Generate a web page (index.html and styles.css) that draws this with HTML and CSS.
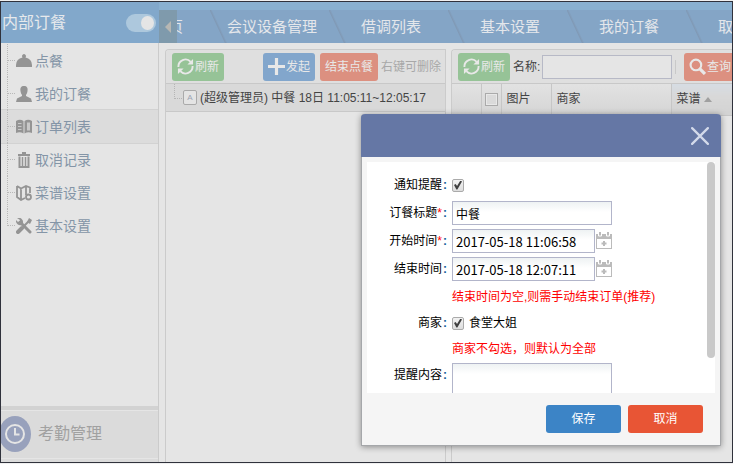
FILE: index.html
```html
<!DOCTYPE html>
<html lang="zh-CN">
<head>
<meta charset="utf-8">
<title>内部订餐</title>
<link rel="stylesheet" href="styles.css">
</head>
<body>
<svg class="defs" aria-hidden="true">
  <symbol id="refresh" viewBox="0 0 18 18"><g fill="none" stroke="currentColor" stroke-width="2"><path d="M1.500 9.500A7.500 7.500 0 0 1 14.500 4"/><path d="M16.500 8.500A7.500 7.500 0 0 1 3.500 14"/></g><path fill="currentColor" d="M17 1v6h-6zM1 17v-6h6z"/></symbol>
  <symbol id="calendar" viewBox="0 0 16 18"><path fill="currentColor" d="M0 2h16v15H0z"/><path fill="#fff" d="M1 7h14v9H1z"/><path fill="currentColor" stroke="#fff" d="M2.500 -1h3v5h-3zM10.500 -1h3v5h-3z"/><path stroke="currentColor" stroke-width="2" d="M8 9v5M5.500 11.500h5"/></symbol>
</svg>
<div class="app">
  <aside class="sidebar">
    <header class="side-head"><h1>内部订餐</h1><label class="switch"><input type="checkbox" checked aria-label="内部订餐"></label></header>
    <nav class="side-nav">
      <a href="#"><svg viewBox="0 0 16 16"><path fill="currentColor" d="M0 14v-2a8 8 0 0 1 6.500-7.500 2 2 0 1 1 3 0A8 8 0 0 1 16 12v2z"/></svg>点餐</a>
      <a href="#"><svg viewBox="0 0 16 16"><path fill="currentColor" d="M8 0c3 0 4 2 3.500 5-.2 2-1 3-1.500 4v1l5 2.500 1 3.500H0l1-3.500L6 10V9C5.500 8 4.700 7 4.500 5 4 2 5 0 8 0z"/></svg>我的订餐</a>
      <a href="#" class="active"><svg viewBox="0 0 16 16"><path fill="currentColor" d="M0 2Q4-.5 7.500 2v12.500Q4 12.500 0 14zM16 2Q12-.5 8.500 2v12.500Q12 12.500 16 14z"/><path stroke="#c8c8c8" d="M2 4.500h3.500M2 7.500h3.500M2 10.500h3.500"/><path fill="#c8c8c8" d="M11 3.500h3v8h-3z"/></svg>订单列表</a>
      <a href="#"><svg viewBox="0 0 16 16"><path fill="currentColor" d="M2 2h4V0h4v2h4v2H2z"/><path fill="none" stroke="currentColor" stroke-width="2" d="M3.500 4.500V15h9V4.500"/><path stroke="currentColor" stroke-width="1.500" d="M6.500 5v10M9.500 5v10"/></svg>取消记录</a>
      <a href="#"><svg viewBox="0 0 16 16"><path fill="none" stroke="currentColor" stroke-width="1.800" d="M1 1l4 2.500L10 1l4 1.500V8M1 1v11l4 3 4-2M5 3.500V15M10 1v9"/><circle cx="12.500" cy="12" r="2.500" fill="none" stroke="currentColor" stroke-width="1.800"/></svg>菜谱设置</a>
      <a href="#"><svg viewBox="0 0 16 16"><g stroke="currentColor" stroke-linecap="round"><path stroke-width="3" d="M4 4l10 10"/><path stroke-width="2" d="M13 3L8 8"/><path stroke-width="4" d="M6 10l-4 4"/></g><path fill="currentColor" d="M1 0l3 2v2L2 4 0 2a4.500 4.500 0 0 0 6 5L7 5A4.500 4.500 0 0 0 1 0zM13 0l3 2-2 4-3-2z"/></svg>基本设置</a>
    </nav>
    <a href="#" class="side-group"><svg viewBox="0 0 32 36"><ellipse cx="16" cy="18" rx="16" ry="18" fill="#98a1bc"/><circle cx="16" cy="18" r="9" fill="none" stroke="#e5e5e5" stroke-width="2"/><path d="M16 12v6.500h4.500" fill="none" stroke="#e5e5e5" stroke-width="2"/></svg>考勤管理</a>
  </aside>
  <main class="main">
    <nav class="tabs">
      <button class="scroll-left" aria-label="向左"></button>
      <a href="#" class="first">页</a>
      <a href="#" class="long">会议设备管理</a>
      <a href="#">借调列表</a>
      <a href="#">基本设置</a>
      <a href="#">我的订餐</a>
      <a href="#">取消记录</a>
    </nav>
    <div class="panels">
      <section class="panel orders">
        <div class="toolbar">
          <button class="btn green"><svg><use href="#refresh"/></svg>刷新</button>
          <span class="spring"></span>
          <button class="btn blue"><svg viewBox="0 0 16 16"><path stroke="currentColor" stroke-width="3" d="M8 0v16M0 8h16"/></svg>发起</button>
          <button class="btn red">结束点餐</button>
          <span class="hint">右键可删除</span>
        </div>
        <div class="tree-row"><span class="node">A</span>(超级管理员) 中餐 18日 11:05:11~12:05:17</div>
      </section>
      <section class="panel">
        <div class="toolbar">
          <button class="btn green"><svg><use href="#refresh"/></svg>刷新</button>
          <label class="search">名称:<input type="text"></label>
          <span class="divider"></span>
          <button class="btn red query"><svg viewBox="0 0 16 16"><circle cx="6.500" cy="6.500" r="5" fill="none" stroke="currentColor" stroke-width="2"/><path stroke="currentColor" stroke-width="3" d="M10 10l5 5"/></svg>查询</button>
        </div>
        <table class="grid">
          <thead><tr><th class="c-num"></th><th class="c-check"><input type="checkbox" class="check pale" aria-label="全选"></th><th class="c-pic">图片</th><th class="c-shop">商家</th><th class="sorted">菜谱 <span class="sort"></span></th></tr></thead>
        </table>
      </section>
    </div>
  </main>
  <div class="dialog" role="dialog" aria-label="订餐">
    <header class="dialog-head"><button class="close" aria-label="关闭"><svg viewBox="0 0 16 16"><path stroke="currentColor" stroke-width="2" stroke-linecap="round" d="M1 1l14 14M15 1L1 15"/></svg></button></header>
    <div class="dialog-body">
      <form class="form" id="order">
        <label for="notify">通知提醒<i>:</i></label><div><input type="checkbox" class="check" id="notify" checked></div>
        <label for="title">订餐标题<b>*</b><i>:</i></label><div><input type="text" id="title" value="中餐"></div>
        <label for="start">开始时间<b>*</b><i>:</i></label><div><input type="text" class="date" id="start" value="2017-05-18 11:06:58"><svg class="cal"><use href="#calendar"/></svg></div>
        <label for="end">结束时间<i>:</i></label><div><input type="text" class="date" id="end" value="2017-05-18 12:07:11"><svg class="cal"><use href="#calendar"/></svg></div>
        <p class="note">结束时间为空,则需手动结束订单(推荐)</p>
        <span class="label">商家<i>:</i></span><div><label class="option"><input type="checkbox" class="check" checked>食堂大姐</label></div>
        <p class="note">商家不勾选，则默认为全部</p>
        <label for="content">提醒内容<i>:</i></label><div><textarea id="content"></textarea></div>
      </form>
      <span class="thumb"></span>
    </div>
    <footer class="dialog-foot"><button class="save">保存</button><button class="cancel">取消</button></footer>
  </div>
</div>
</body>
</html>
```
FILE: styles.css
```css
* { box-sizing: border-box; }
body {
  margin: 0;
  padding: 1px 0;
  background: #f0f0f0;
  font: 12px/16px "Liberation Sans", "Noto Sans CJK SC", sans-serif;
  color: #444;
}
button, input, textarea { font: inherit; color: inherit; margin: 0; }
button { border: 0; padding: 0; }
a { text-decoration: none; color: inherit; }
i { font-style: normal; }
.defs { position: absolute; width: 0; height: 0; }

.app {
  position: relative;
  display: flex;
  height: calc(100vh - 2px);
  overflow: hidden;
  border: 1px solid #30323c;
  background: #e5e5e5;
}

/* Sidebar */
.sidebar {
  flex: 0 0 158px;
  display: flex;
  flex-direction: column;
  border-right: 1px solid #cbcbcb;
}
.side-head {
  display: flex;
  align-items: center;
  justify-content: space-between;
  height: 41px;
  margin-right: -1px;
  padding: 0 3px 0 1px;
  background: #82a8cb;
  color: #e6e9ec;
}
.side-head h1 { margin: 0; font-size: 16px; font-weight: 400; }
.switch { display: flex; }
.switch input {
  appearance: none;
  display: flex;
  justify-content: flex-end;
  width: 30px;
  height: 18px;
  padding: 2px;
  border-radius: 9px;
  background: #adc8dd;
}
.switch input::before { content: ""; width: 13px; height: 14px; border-radius: 50%; background: #e5e5e5; }
.side-nav { padding-top: 1px; flex: 1; }
.side-nav a {
  display: flex;
  align-items: center;
  gap: 3px;
  height: 33px;
  font-size: 14px;
  color: #8495a7;
}
.side-nav a::before {
  content: "";
  width: 7px;
  align-self: stretch;
  margin: 0 -2px 0 6px;
  border-left: 1px dotted #b8b8b8;
  background: linear-gradient(90deg, #b8b8b8 50%, transparent 50%) 0 16px / 2px 1px repeat-x;
}
.side-nav a:last-child::before { height: 17px; align-self: flex-start; }
.side-nav svg { width: 16px; height: 16px; color: #949494; }
.side-nav .active { background: #dcdcdc; box-shadow: 0 -1px #d2d2d2, 0 1px #d2d2d2; }
.side-group {
  display: flex;
  align-items: center;
  gap: 7px;
  height: 56px;
  padding-bottom: 4px;
  border-top: 4px solid #d2d2d2;
  background: linear-gradient(#e5e5e5 1px, #dbdbdb 1px, #dbdbdb 48px, #e5e5e5 48px, #e5e5e5 49px, #dbdbdb 49px);
  color: #a1a1a1;
  font-size: 16px;
}
.side-group svg { width: 32px; height: 36px; margin-left: -2px; }

/* Tabs */
.main { flex: 1; min-width: 0; display: flex; flex-direction: column; }
.tabs {
  position: relative;
  display: flex;
  flex: 0 0 41px;
  padding-top: 8px;
  overflow: hidden;
  background: #89b0d0;
}
.tabs a {
  flex: 0 0 119px;
  display: flex;
  align-items: center;
  justify-content: center;
  padding: 0 0 0 5px;
  overflow: hidden;
  white-space: nowrap;
  font-size: 15px;
  color: #e4e7eb;
  background: linear-gradient(65deg, transparent 13px, #8099b5 14px, transparent 16px) #84a5c6;
}
.tabs .first { flex-basis: 51px; justify-content: flex-end; padding-right: 27px; background: #84a5c6; }
.tabs .long { justify-content: flex-start; padding-left: 17px; }
.scroll-left {
  position: absolute;
  left: 0;
  top: 8px;
  width: 18px;
  height: 33px;
  display: flex;
  align-items: center;
  justify-content: center;
  background: #7f9aac;
}
.scroll-left::before { content: ""; border: 6px solid transparent; border-right-color: #b7b7b3; border-left: 0; }

/* Panels */
.panels { flex: 1; display: flex; gap: 5px; padding: 6px 0 0 6px; min-width: 0; }
.panel { flex: 1; min-width: 0; border: 1px solid #cbcbcb; border-bottom: 0; border-radius: 4px 0 0; overflow: hidden; }
.orders { flex: 0 0 281px; }
.panel:last-child { border-right: 0; }
.toolbar {
  display: flex;
  align-items: center;
  gap: 5px;
  height: 34px;
  padding: 0 4px 0 6px;
  background: #dfdfdf;
  border-bottom: 1px solid #c8c8c8;
  white-space: nowrap;
}
.spring { flex: 1; }
.btn {
  flex: none;
  display: flex;
  align-items: center;
  justify-content: center;
  gap: 1px;
  height: 28px;
  min-width: 52px;
  padding: 0 5px;
  border-radius: 3px;
  color: #e8e8e8;
}
.btn svg { width: 17px; height: 17px; }
.green { background: #96c397; }
.blue { background: #82a6cc; }
.red { background: #dc9080; }
.query { min-width: 0; margin-right: -4px; padding-right: 1px; border-radius: 3px 0 0 3px; }
.hint { color: #a8a8a8; margin-left: -2px; }
.tree-row {
  display: flex;
  align-items: center;
  height: 28px;
  padding-left: 8px;
  background: #d9d9d9;
  border-bottom: 1px solid #c8c8c8;
  white-space: pre;
}
.tree-row::before {
  content: "";
  width: 7px;
  height: 14px;
  align-self: flex-start;
  border: dotted #b5b5b5;
  border-width: 0 0 1px 1px;
}
.node {
  width: 14px;
  height: 15px;
  margin: 0 3px 0 1px;
  border: 1px solid #aaa;
  border-radius: 2px;
  background: #e4e4e4;
  color: #9ba3b2;
  font-size: 8px;
  line-height: 14px;
  text-align: center;
}
.search { flex: 1; display: flex; align-items: center; gap: 2px; min-width: 0; }
.search input { flex: 1; min-width: 0; height: 24px; border: 1px solid #b7b9c6; background: #e5e5e5; }
.toolbar .green + .search { margin-left: -2px; }
.divider { width: 1px; height: 14px; margin: 0 3px 0 -2px; background: #c9c9c9; }
.grid { width: 100%; table-layout: fixed; border-collapse: collapse; background: linear-gradient(#e2e2e2, #d5d5d5); }
.grid tr { height: 31px; }
.grid th { padding: 0 5px; border-left: 1px solid #c6c6c6; border-bottom: 1px solid #c6c6c6; text-align: left; font-weight: 400; }
.grid .c-num { width: 29px; border-left: 0; }
.grid .c-check { width: 20px; padding: 0 3px; }
.grid .c-pic { width: 50px; }
.grid .c-shop { width: 120px; }
.grid .sorted { background: linear-gradient(#d6dce3, #d8d8d8 40%, #d2d2d2); }
.sort { display: inline-block; margin-bottom: 1px; border: 4px solid transparent; border-bottom: 5px solid #a0a0a0; border-top: 0; }

.check {
  appearance: none;
  display: block;
  width: 12px;
  height: 13px;
  border: 1px solid #aaa;
  border-radius: 2px;
  background: linear-gradient(#f2f2f2, #ddd);
}
.check:checked::before {
  content: "";
  display: block;
  width: 8px;
  height: 9px;
  margin: 1px;
  background: #404040;
  clip-path: polygon(0 50%, 20% 40%, 38% 60%, 80% 0, 100% 12%, 42% 100%, 30% 100%);
}
.pale { width: 13px; border-radius: 0; background: #dadada; box-shadow: inset 0 0 0 1px #e8e8e8; }

/* Dialog */
.dialog {
  position: absolute;
  left: 360px;
  top: 112px;
  width: 360px;
  border: 1px solid #a5a7aa;
  border-top: 0;
  border-radius: 4px 4px 0 0;
  background: #f5f5f5;
  box-shadow: 0 1px 6px rgba(0, 0, 0, .4);
  color: #000;
}
.dialog-head {
  display: flex;
  align-items: center;
  justify-content: flex-end;
  height: 43px;
  margin: 0 -1px;
  padding-right: 12px;
  border-radius: 4px 4px 0 0;
  background: #6577a5;
}
.close { display: flex; background: none; color: #d3daea; }
.close svg { width: 18px; height: 18px; }
.dialog-body { position: relative; margin: 5px 5px 0; height: 231px; overflow: hidden; background: #fff; }
.thumb { position: absolute; right: 0; top: 0; width: 8px; height: 196px; border-radius: 4px; background: #c9c9c9; }
.form {
  display: grid;
  grid-template-columns: 80px 1fr;
  grid-template-rows: 28px 28px 28px 28px 28px 24px 28px auto;
  column-gap: 5px;
  align-items: center;
  padding-top: 9px;
}
.form > label, .label { text-align: right; white-space: nowrap; }
.form i { margin-left: 1px; color: #17609a; font-weight: 700; }
.form b { font-weight: 400; color: #f00; }
.form > div { display: flex; align-items: center; gap: 1px; }
.form input[type="text"], .form textarea {
  width: 160px;
  height: 24px;
  padding: 0 3px;
  border: 1px solid #b2b5ca;
  background: linear-gradient(#eef2f3, #fff 10px);
}
.form input.date { width: 143px; font: 13px "Noto Sans CJK SC", sans-serif; }
.cal { width: 16px; height: 18px; color: #bbb; }
.option { display: flex; align-items: center; gap: 5px; }
.note { grid-column: 2; margin: 0; color: #f00; }
.form textarea { height: 60px; resize: none; display: block; }
.form label[for="content"] { align-self: start; padding-top: 4px; }
.dialog-foot { display: flex; justify-content: flex-end; gap: 7px; padding: 12px 17px; }
.dialog-foot button { width: 75px; height: 28px; border-radius: 3px; color: #fff; }
.save { background: #3c84c6; }
.cancel { background: #e85535; }
```
